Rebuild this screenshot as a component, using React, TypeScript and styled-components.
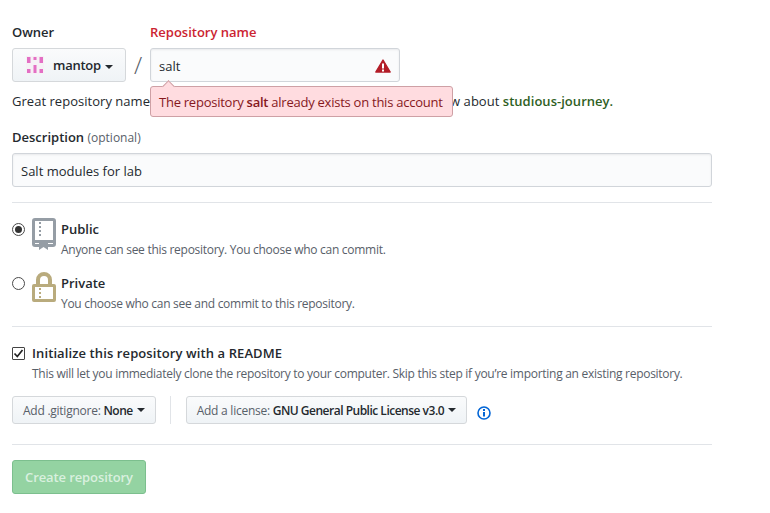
import React from "react";
import styled, { createGlobalStyle } from "styled-components";

const Global = createGlobalStyle`
  html, body { margin: 0; padding: 0; background: #fff; }
  body { font-family: "Open Sans", "Noto Sans", "Liberation Sans", sans-serif; font-size: 13px; color: #24292e; }
`;

const Page = styled.div`
  width: 700px;
  padding: 23px 0 0 12px;
`;
const NameGrid = styled.div`
  display: grid;
  grid-template-columns: 114px 24px 250px;
  row-gap: 7px;
`;
const Label = styled.div<{ $error?: boolean }>`
  font-weight: 600;
  font-size: 13px;
  line-height: 18px;
  color: ${(p) => (p.$error ? "#cb2431" : "#24292e")};
`;
const Spacer = styled.div``;
const OwnerButton = styled.div`
  height: 34px;
  box-sizing: border-box;
  border: 1px solid #d5d8db;
  border-radius: 3px;
  background: linear-gradient(#fafbfc, #eff3f6);
  display: flex;
  align-items: center;
  padding-left: 13px;
  gap: 9px;
  font-weight: 600;
  letter-spacing: -0.25px;
`;
const Caret = styled.span`
  display: inline-block;
  width: 0;
  height: 0;
  border-left: 4px solid transparent;
  border-right: 4px solid transparent;
  border-top: 4px solid #24292e;
  margin-left: 4px;
  vertical-align: middle;
`;
const Slash = styled.div`
  font-size: 24px;
  font-weight: 300;
  line-height: 34px;
  color: #586069;
  text-align: center;
`;
const InputWrap = styled.div`
  position: relative;
`;
const TextInput = styled.div`
  height: 34px;
  box-sizing: border-box;
  border: 1px solid #d1d5da;
  border-radius: 3px;
  background: #fafbfc;
  box-shadow: inset 0 1px 2px rgba(27, 31, 35, 0.075);
  display: flex;
  align-items: center;
  justify-content: space-between;
  padding: 1px 8px 0;
  line-height: 20px;
`;
const ErrorTip = styled.div`
  position: absolute;
  top: 38px;
  left: 0;
  width: 303px;
  height: 31px;
  box-sizing: border-box;
  background: #ffdce0;
  border: 1px solid #cea0a5;
  border-radius: 3px;
  color: #86181d;
  display: flex;
  align-items: center;
  padding-left: 8px;
  white-space: nowrap;
  letter-spacing: -0.25px;
  &::before {
    content: "";
    position: absolute;
    top: -5px;
    left: 13px;
    width: 8px;
    height: 8px;
    background: #ffdce0;
    border-left: 1px solid #cea0a5;
    border-top: 1px solid #cea0a5;
    transform: rotate(45deg);
  }
`;
const TipStrong = styled.strong`
  font-weight: 600;
`;
const Note = styled.p`
  margin: 10px 0 0;
  line-height: 18px;
  white-space: nowrap;
  letter-spacing: 0.03px;
`;
const Suggestion = styled.strong`
  font-weight: 600;
  color: #2f5f1f;
`;
const Optional = styled.span`
  font-weight: 400;
  font-size: 12px;
  color: #586069;
`;
const Block = styled.div<{ $top: number }>`
  margin-top: ${(p) => p.$top}px;
`;
const Rule = styled.hr<{ $top: number }>`
  border: 0;
  height: 1px;
  background: #e1e4e8;
  margin: ${(p) => p.$top}px 0 0;
`;
const Visibility = styled.div<{ $top: number }>`
  display: grid;
  grid-template-columns: 20px 29px 1fr;
  margin-top: ${(p) => p.$top}px;
  height: 33px;
`;
const RadioDot = styled.span<{ $on?: boolean }>`
  width: 13px;
  height: 13px;
  box-sizing: border-box;
  border: 1px solid #4a4a4a;
  border-radius: 50%;
  margin-top: 3px;
  background: #fff;
  display: flex;
  align-items: center;
  justify-content: center;
  &::after {
    content: "";
    width: 7px;
    height: 7px;
    border-radius: 50%;
    background: ${(p) => (p.$on ? "#333" : "transparent")};
  }
`;
const IconSlot = styled.span`
  display: block;
  margin-top: -2px;
`;
const OptionTitle = styled.div`
  font-weight: 600;
  font-size: 13px;
  line-height: 18px;
`;
const CheckTitle = styled(OptionTitle)`
  letter-spacing: 0.1px;
`;
const OptionText = styled.div`
  font-size: 12px;
  line-height: 18px;
  margin-top: 3px;
  color: #586069;
  white-space: nowrap;
  letter-spacing: -0.28px;
`;
const CheckRow = styled.div`
  display: grid;
  grid-template-columns: 20px 1fr;
  margin-top: 17px;
`;
const CheckBox = styled.span`
  width: 13px;
  height: 13px;
  box-sizing: border-box;
  border: 1px solid #444;
  border-radius: 1px;
  margin-top: 3px;
  display: flex;
  align-items: center;
  justify-content: center;
`;
const Selects = styled.div`
  display: flex;
  align-items: center;
  margin-top: 13px;
  height: 28px;
`;
const SelectButton = styled.div`
  height: 28px;
  box-sizing: border-box;
  border: 1px solid #d5d8db;
  border-radius: 3px;
  background: linear-gradient(#fafbfc, #eff3f6);
  display: flex;
  align-items: center;
  padding: 0 10px;
  font-size: 12px;
  color: #586069;
  white-space: pre;
  letter-spacing: -0.25px;
`;
const SelectValue = styled.span`
  color: #24292e;
  font-weight: 600;
  letter-spacing: -0.5px;
`;
const VDivider = styled.span`
  width: 1px;
  height: 28px;
  background: #e1e4e8;
  margin: 0 15px 0 14px;
`;
const InfoLink = styled.span`
  display: flex;
  margin: 5px 0 0 10px;
`;
const CreateButton = styled.div`
  margin-top: 15px;
  width: 134px;
  height: 34px;
  box-sizing: border-box;
  border: 1px solid #7cbf8e;
  border-radius: 3px;
  background: #94d3a2;
  color: #d9f0df;
  font-weight: 600;
  font-size: 13px;
  letter-spacing: -0.1px;
  display: flex;
  align-items: center;
  justify-content: center;
`;

const Identicon = () => (
  <svg width="18" height="18" viewBox="0 0 18 18" aria-hidden>
    <rect width="18" height="18" fill="#f6f1f5" />
    <g fill="#e36fc4">
      <rect x="1" y="1" width="3.500" height="6" />
      <rect x="7.500" y="1" width="3" height="3" />
      <rect x="13.500" y="1" width="3.500" height="6" />
      <rect x="1" y="13" width="3.500" height="4" />
      <rect x="7.500" y="9" width="3" height="8" />
      <rect x="13.500" y="13" width="3.500" height="4" />
    </g>
  </svg>
);
const Warn = () => (
  <svg width="16" height="14" viewBox="0 0 16 14" aria-hidden>
    <path d="M8 1 L15.200 13 H0.800 Z" fill="#b31d28" stroke="#b31d28" strokeWidth="1.400" strokeLinejoin="round" />
    <rect x="7" y="4.500" width="2" height="5" fill="#fff" />
    <rect x="7" y="10.500" width="2" height="2" fill="#fff" />
  </svg>
);
const Book = () => (
  <svg width="24" height="32" viewBox="0 0 24 32" fill="#959da5" aria-hidden>
    <path fillRule="evenodd" d="M3 0h18a3 3 0 0 1 3 3v23a3 3 0 0 1-3 3h-5v-3h5v-1H3v1h4v3H3a3 3 0 0 1-3-3V3a3 3 0 0 1 3-3zm0 3v19h18V3z" />
    <path d="M7 25h9v7l-4.500-3L7 32z" />
    <rect x="7" y="4" width="2" height="2" /><rect x="7" y="8" width="2" height="2" /><rect x="7" y="12" width="2" height="2" /><rect x="7" y="16" width="2" height="2" />
  </svg>
);
const Lock = () => (
  <svg width="24" height="30" viewBox="0 0 24 30" fill="#b9ab7d" aria-hidden>
    <path fillRule="evenodd" d="M4 12V8a8 8 0 0 1 16 0v4h2a2 2 0 0 1 2 2v14a2 2 0 0 1-2 2H2a2 2 0 0 1-2-2V14a2 2 0 0 1 2-2zm4 0h8V8a4 4 0 0 0-8 0zM3 15v12h18V15z" />
    <rect x="7" y="16" width="2" height="2" /><rect x="7" y="20" width="2" height="2" /><rect x="7" y="24" width="2" height="2" />
  </svg>
);
const Check = () => (
  <svg width="11" height="11" viewBox="0 0 11 11" aria-hidden>
    <path d="M1.500 5.500 L4.300 8.500 L9.500 2" fill="none" stroke="#222" strokeWidth="1.700" />
  </svg>
);
const Info = () => (
  <svg width="14" height="14" viewBox="0 0 14 14" aria-hidden>
    <circle cx="7" cy="7" r="6" fill="none" stroke="#0366d6" strokeWidth="1.600" />
    <rect x="6" y="6" width="2" height="4.500" fill="#0366d6" />
    <rect x="6" y="3" width="2" height="2" fill="#0366d6" />
  </svg>
);

export default function App() {
  return (
    <Page>
      <Global />
      <NameGrid>
        <Label>Owner</Label>
        <Spacer />
        <Label $error>Repository name</Label>
        <OwnerButton>
          <Identicon />
          <span>mantop<Caret /></span>
        </OwnerButton>
        <Slash>/</Slash>
        <InputWrap>
          <TextInput>
            <span>salt</span>
            <Warn />
          </TextInput>
          <ErrorTip>
            <span>The repository <TipStrong>salt</TipStrong> already exists on this account</span>
          </ErrorTip>
        </InputWrap>
      </NameGrid>
      <Note>
        Great repository names are short and memorable. Need inspiration? How about <Suggestion>studious-journey.</Suggestion>
      </Note>
      <Block $top={18}>
        <Label>Description <Optional>(optional)</Optional></Label>
      </Block>
      <Block $top={6}>
        <TextInput>Salt modules for lab</TextInput>
      </Block>
      <Rule $top={15} />
      <Visibility $top={17}>
        <RadioDot $on />
        <IconSlot><Book /></IconSlot>
        <div>
          <OptionTitle>Public</OptionTitle>
          <OptionText>Anyone can see this repository. You choose who can commit.</OptionText>
        </div>
      </Visibility>
      <Visibility $top={21}>
        <RadioDot />
        <IconSlot><Lock /></IconSlot>
        <div>
          <OptionTitle>Private</OptionTitle>
          <OptionText>You choose who can see and commit to this repository.</OptionText>
        </div>
      </Visibility>
      <Rule $top={19} />
      <CheckRow>
        <CheckBox><Check /></CheckBox>
        <div>
          <CheckTitle>Initialize this repository with a README</CheckTitle>
          <OptionText>This will let you immediately clone the repository to your computer. Skip this step if you’re importing an existing repository.</OptionText>
        </div>
      </CheckRow>
      <Selects>
        <SelectButton>Add .gitignore: <SelectValue>None</SelectValue><Caret /></SelectButton>
        <VDivider />
        <SelectButton>Add a license: <SelectValue>GNU General Public License v3.0</SelectValue><Caret /></SelectButton>
        <InfoLink><Info /></InfoLink>
      </Selects>
      <Rule $top={20} />
      <CreateButton>Create repository</CreateButton>
    </Page>
  );
}
